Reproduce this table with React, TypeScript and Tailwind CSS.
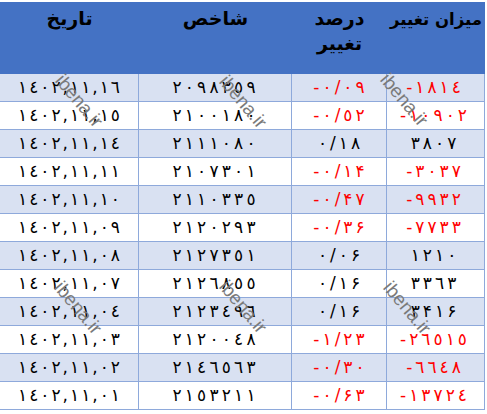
import React from "react";

type Row = { d: string; idx: string; p: string; c: string; neg: boolean };

const rows: Row[] = [
  { d: "١٤٠٢,١١,١٦", idx: "٢٠٩٨٣٥٩", p: "-٠/٠٩", c: "-١٨١٤", neg: true },
  { d: "١٤٠٢,١١,١٥", idx: "٢١٠٠١٨٠", p: "-٠/٥٢", c: "-١٠٩٠٢", neg: true },
  { d: "١٤٠٢,١١,١٤", idx: "٢١١١٠٨٠", p: "٠/١٨", c: "٣٨٠٧", neg: false },
  { d: "١٤٠٢,١١,١١", idx: "٢١٠٧٣٠١", p: "-٠/١۴", c: "-٣٠٣٧", neg: true },
  { d: "١٤٠٢,١١,١٠", idx: "٢١١٠٣٣٥", p: "-٠/۴٧", c: "-٩٩٣٢", neg: true },
  { d: "١٤٠٢,١١,٠٩", idx: "٢١٢٠٢٩٣", p: "-٠/٣۶", c: "-٧٧٣٣", neg: true },
  { d: "١٤٠٢,١١,٠٨", idx: "٢١٢٧٣٥١", p: "٠/٠۶", c: "١٢١٠", neg: false },
  { d: "١٤٠٢,١١,٠٧", idx: "٢١٢٦٨٥٥", p: "٠/١۶", c: "٣٣٦٣", neg: false },
  { d: "١٤٠٢,١١,٠٤", idx: "٢١٢٣٤٩٦", p: "٠/١۶", c: "٣۴١۶", neg: false },
  { d: "١٤٠٢,١١,٠٣", idx: "٢١٢٠٠٤٨", p: "-١/٢٣", c: "-٢٦٥١٥", neg: true },
  { d: "١٤٠٢,١١,٠٢", idx: "٢١٤٦٥٦٣", p: "-٠/٣٠", c: "-٦٦٤٨", neg: true },
  { d: "١٤٠٢,١١,٠١", idx: "٢١٥٣٢١١", p: "-٠/۶٣", c: "-١٣٧٢٤", neg: true },
];

const marks = [
  { x: 79, y: 101 },
  { x: 243, y: 102 },
  { x: 404, y: 100 },
  { x: 78, y: 308 },
  { x: 243, y: 307 },
  { x: 407, y: 308 },
];

function Chars({ s, className }: { s: string; className: string }) {
  return (
    <span className={`flex ${className}`}>
      {Array.from(s).map((ch, i) => (
        <span key={i}>{ch}</span>
      ))}
    </span>
  );
}

export default function App() {
  return (
    <div className="relative w-[487px] h-[414px] overflow-hidden bg-white pt-[2px] font-['DejaVu_Sans',sans-serif] text-black">
      <div className="w-[485px]">
        <div className="grid grid-cols-[139px_153px_95px_98px] h-[72px] bg-[#4472C4] font-bold text-[19px] leading-[25px]">
          <div className="flex justify-center pt-[4px]" dir="rtl">تاریخ</div>
          <div className="flex justify-center pt-[4px]" dir="rtl">شاخص</div>
          <div className="flex flex-col items-center pt-[4px]" dir="rtl">
            <span>درصد</span>
            <span>تغییر</span>
          </div>
          <div className="flex justify-center pt-[5px] whitespace-nowrap text-[16.5px]" dir="rtl">میزان تغییر</div>
        </div>
        {rows.map((r, i) => (
          <div
            key={i}
            className={`grid grid-cols-[139px_153px_95px_98px] h-[28px] border-b border-[#8EA9DB] ${i % 2 === 0 ? "bg-[#D9E1F2]" : "bg-white"}`}
          >
            <div className="flex items-center justify-center border-r border-[#8EA9DB] text-[17px]">
              <Chars s={r.d} className="gap-[2px]" />
            </div>
            <div className="flex items-center justify-center border-r border-[#8EA9DB] text-[17px] pr-[2px]">
              <Chars s={r.idx} className="gap-[3.2px]" />
            </div>
            <div className={`flex items-center justify-center border-r border-[#8EA9DB] text-[17px] ${r.neg ? "text-[#FF0000]" : "text-black"}`}>
              <Chars s={r.p} className="gap-[3px]" />
            </div>
            <div className={`flex items-center justify-center border-r border-[#8EA9DB] text-[17px] pr-[4px] ${r.neg ? "text-[#FF0000]" : "text-black"}`}>
              <Chars s={r.c} className="gap-[3px]" />
            </div>
          </div>
        ))}
      </div>
      {marks.map((m, i) => (
        <span
          key={i}
          className="absolute w-[70px] h-[22px] flex items-center justify-center rotate-[50deg] font-['Liberation_Sans',sans-serif] text-[19px] leading-[22px] text-[#7a7a7a] pointer-events-none"
          style={{ left: m.x - 35, top: m.y - 11 }}
        >
          ibena.ir
        </span>
      ))}
    </div>
  );
}
